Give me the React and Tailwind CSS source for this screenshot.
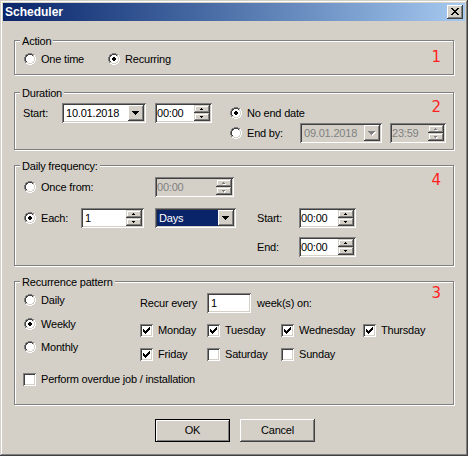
import React from "react";

const SUNKEN =
  "shadow-[inset_1px_1px_0_#808080,inset_-1px_-1px_0_#ffffff,inset_2px_2px_0_#404040,inset_-2px_-2px_0_#d4d0c8]";
const RAISED =
  "shadow-[inset_-1px_-1px_0_#404040,inset_1px_1px_0_#ffffff,inset_-2px_-2px_0_#808080,inset_2px_2px_0_#d4d0c8]";
const RAISED_SM =
  "shadow-[inset_-1px_-1px_0_#404040,inset_1px_1px_0_#d4d0c8,inset_-2px_-2px_0_#808080,inset_2px_2px_0_#ffffff]";

const PAL = {
  a: "#808080",
  b: "#404040",
  c: "#d4d0c8",
  d: "#ffffff",
  w: "#ffffff",
  k: "#000000",
  g: "#808080",
  h: "#ffffff",
};

function Bitmap({ rows, className = "" }) {
  const h = rows.length;
  const w = rows[0].length;
  const rects = [];
  rows.forEach((row, y) => {
    for (let x = 0; x < w; x++) {
      const col = PAL[row[x]];
      if (col) rects.push(<rect key={x + "-" + y} x={x} y={y} width="1" height="1" fill={col} />);
    }
  });
  return (
    <svg width={w} height={h} viewBox={`0 0 ${w} ${h}`} shapeRendering="crispEdges" className={`block shrink-0 ${className}`}>
      {rects}
    </svg>
  );
}

const RADIO_ON = [
  "....aaaa....",
  "..aabbbbaa..",
  ".abbwwwwbcd.",
  ".abwwwwwwcd.",
  "abwwwkkwwwcd",
  "abwwkkkkwwcd",
  "abwwkkkkwwcd",
  "abwwwkkwwwcd",
  ".abwwwwwwcd.",
  ".accwwwwccd.",
  "..ddccccdd..",
  "....dddd....",
];
const RADIO_OFF = RADIO_ON.map((r) => r.replace(/k/g, "w"));

const CHECK = [
  "......k",
  ".....kk",
  "k...kkk",
  "kk.kkk.",
  "kkkkk..",
  ".kkk...",
  "..k....",
];

const CLOSE_X = [
  "kk....kk",
  ".kk..kk.",
  "..kkkk..",
  "...kk...",
  "..kkkk..",
  ".kk..kk.",
  "kk....kk",
];

const ARROW = ["kkkkkkk", ".kkkkk.", "..kkk..", "...k..."];
const ARROW_DIS = ["ggggggg.", ".ggggghh", "..ggghh.", "...ghh..", "....h..."];
const UP = [".k.", "kkk"];
const DOWN = ["kkk", ".k."];
const UP_DIS = [".g..", "ggg.", ".hhh"];
const DOWN_DIS = ["ggg.", ".ghh", "..h."];

function Radio({ checked, label, className = "" }) {
  return (
    <div className={`flex items-center h-[14px] shrink-0 ${className}`}>
      <Bitmap rows={checked ? RADIO_ON : RADIO_OFF} />
      <span className="ml-[5px] whitespace-nowrap">{label}</span>
    </div>
  );
}

function Check({ checked, label, className = "" }) {
  return (
    <div className={`flex items-center h-[13px] shrink-0 ${className}`}>
      <div className={`${SUNKEN} bg-white w-[13px] h-[13px] shrink-0 pl-[3px] pt-[3px]`}>
        {checked && <Bitmap rows={CHECK} />}
      </div>
      <span className="ml-[5px] whitespace-nowrap">{label}</span>
    </div>
  );
}

function Combo({ className = "", text, disabled, selected }) {
  return (
    <div
      className={`${SUNKEN} ${disabled ? "bg-[#d4d0c8] text-[#808080]" : "bg-white"} p-[2px] flex shrink-0 ${className}`}
    >
      <div className={`flex-1 flex items-center pl-[2px] whitespace-nowrap ${selected ? "bg-[#0a246a] text-white" : ""}`}>
        {text}
      </div>
      <div className={`${RAISED} bg-[#d4d0c8] w-[16px] pl-[4px] pt-[6px] shrink-0`}>
        <Bitmap rows={disabled ? ARROW_DIS : ARROW} />
      </div>
    </div>
  );
}

function Spin({ className = "", text, disabled, textPad = "pl-0" }) {
  return (
    <div
      className={`${SUNKEN} ${disabled ? "bg-[#d4d0c8] text-[#808080]" : "bg-white"} p-[2px] flex shrink-0 ${className}`}
    >
      <div className={`flex-1 flex items-center whitespace-nowrap ${textPad}`}>{text}</div>
      <div className="w-[16px] flex flex-col shrink-0">
        <div className={`${RAISED_SM} bg-[#d4d0c8] h-[8px] pl-[6px] pt-[3px]`}>
          <Bitmap rows={disabled ? UP_DIS : UP} />
        </div>
        <div className={`${RAISED_SM} bg-[#d4d0c8] h-[8px] pl-[6px] pt-[3px]`}>
          <Bitmap rows={disabled ? DOWN_DIS : DOWN} />
        </div>
      </div>
    </div>
  );
}

function Group({ className = "", label, num, numClass = "", children }) {
  return (
    <div
      className={`relative border border-[#808080] shadow-[1px_1px_0_#ffffff,inset_1px_1px_0_#ffffff] shrink-0 ${className}`}
    >
      <span className="absolute -top-[6px] left-[5px] px-[2px] bg-[#d4d0c8] leading-[13px] whitespace-nowrap">
        {label}
      </span>
      <span
        className={`absolute right-[12px] text-[#ff1f1f] font-['DejaVu_Sans',sans-serif] text-[15px] leading-[15px] tracking-normal ${numClass}`}
      >
        {num}
      </span>
      {children}
    </div>
  );
}

function Button({ children, isDefault }) {
  return (
    <div
      className={`w-[75px] h-[23px] bg-[#d4d0c8] flex items-center justify-center ${
        isDefault
          ? "border border-black shadow-[inset_1px_1px_0_#ffffff,inset_-1px_-1px_0_#808080]"
          : RAISED
      }`}
    >
      {children}
    </div>
  );
}

export default function App() {
  return (
    <div className="w-[468px] h-[456px] bg-[#d4d0c8] p-[3px] shadow-[inset_-1px_-1px_0_#404040,inset_1px_1px_0_#d4d0c8,inset_-2px_-2px_0_#808080,inset_2px_2px_0_#ffffff] font-['Liberation_Sans',Arial,sans-serif] text-[11px] leading-[13px] tracking-[-0.2px] text-black flex flex-col select-none overflow-hidden">
      {/* Title bar */}
      <div className="h-[18px] bg-linear-to-r from-[#0a246a] to-[#a6caf0] flex items-center justify-between pl-[2px] pr-[2px] shrink-0">
        <span className="text-white font-bold text-[12px] tracking-normal leading-[14px]">Scheduler</span>
        <div className={`${RAISED} bg-[#d4d0c8] w-[16px] h-[14px] pl-[4px] pt-[3px]`}>
          <Bitmap rows={CLOSE_X} />
        </div>
      </div>

      {/* Body */}
      <div className="px-[11px] flex flex-col">
        {/* Action */}
        <Group className="mt-[19px] h-[35px]" label="Action" num="1" numClass="top-[9px]">
          <div className="flex pl-[9px] mt-[11px]">
            <Radio label="One time" className="w-[84px]" />
            <Radio label="Recurring" checked />
          </div>
        </Group>

        {/* Duration */}
        <Group className="mt-[17px] h-[58px]" label="Duration" num="2" numClass="top-[7px]">
          <div className="flex pt-[10px] pl-[8px]">
            <div className="flex items-center h-[20px]">
              <span className="w-[39px] shrink-0">Start:</span>
              <Combo className="w-[84px] h-[20px]" text="10.01.2018" />
              <Spin className="ml-[9px] w-[57px] h-[20px]" text="00:00" />
            </div>
            <div className="flex flex-col ml-[18px]">
              <div className="flex items-center h-[20px]">
                <Radio label="No end date" checked />
              </div>
              <div className="flex items-center h-[20px]">
                <Radio label="End by:" className="w-[70px]" />
                <Combo className="w-[82px] h-[20px]" text="09.01.2018" disabled />
                <Spin className="ml-[8px] w-[56px] h-[20px]" text="23:59" disabled />
              </div>
            </div>
          </div>
        </Group>

        {/* Daily frequency */}
        <Group className="mt-[15px] h-[101px]" label="Daily frequency:" num="4" numClass="top-[7px]">
          <div className="flex flex-col pt-[11px] pl-[9px]">
            <div className="flex items-center h-[20px]">
              <Radio label="Once from:" className="w-[131px]" />
              <Spin className="w-[79px] h-[20px]" text="00:00" disabled />
            </div>
            <div className="flex items-center h-[20px] mt-[11px]">
              <Radio label="Each:" checked className="w-[57px]" />
              <Spin className="w-[63px] h-[20px]" text="1" textPad="pl-[2px]" />
              <Combo className="ml-[11px] w-[81px] h-[20px]" text="Days" selected />
              <span className="ml-[21px] w-[42px] shrink-0">Start:</span>
              <Spin className="w-[57px] h-[20px]" text="00:00" />
            </div>
            <div className="flex items-center h-[20px] mt-[9px] pl-[233px]">
              <span className="w-[42px] shrink-0">End:</span>
              <Spin className="w-[57px] h-[20px]" text="00:00" />
            </div>
          </div>
        </Group>

        {/* Recurrence pattern */}
        <Group className="mt-[15px] h-[124px]" label="Recurrence pattern" num="3" numClass="top-[4px]">
          <div className="flex flex-col pt-[11px] pl-[9px]">
            <div className="flex">
              <div className="flex flex-col w-[116px] shrink-0">
                <Radio label="Daily" />
                <Radio label="Weekly" checked className="mt-[10px]" />
                <Radio label="Monthly" className="mt-[9px]" />
              </div>
              <div className="flex flex-col">
                <div className="flex items-center h-[20px]">
                  <span className="w-[67px] shrink-0">Recur every</span>
                  <div className={`${SUNKEN} bg-white w-[44px] h-[20px] p-[2px] pl-[4px] flex items-center shrink-0`}>1</div>
                  <span className="ml-[6px]">week(s) on:</span>
                </div>
                <div className="flex mt-[11px]">
                  <Check label="Monday" checked className="w-[67px]" />
                  <Check label="Tuesday" checked className="w-[74px]" />
                  <Check label="Wednesday" checked className="w-[82px]" />
                  <Check label="Thursday" checked />
                </div>
                <div className="flex mt-[11px]">
                  <Check label="Friday" checked className="w-[67px]" />
                  <Check label="Saturday" className="w-[74px]" />
                  <Check label="Sunday" />
                </div>
              </div>
            </div>
            <Check label="Perform overdue job / installation" className="mt-[12px] -ml-[1px]" />
          </div>
        </Group>

        {/* Buttons */}
        <div className="flex justify-center gap-[10px] mt-[14px] pl-[2px]">
          <Button isDefault>OK</Button>
          <Button>Cancel</Button>
        </div>
      </div>
    </div>
  );
}
